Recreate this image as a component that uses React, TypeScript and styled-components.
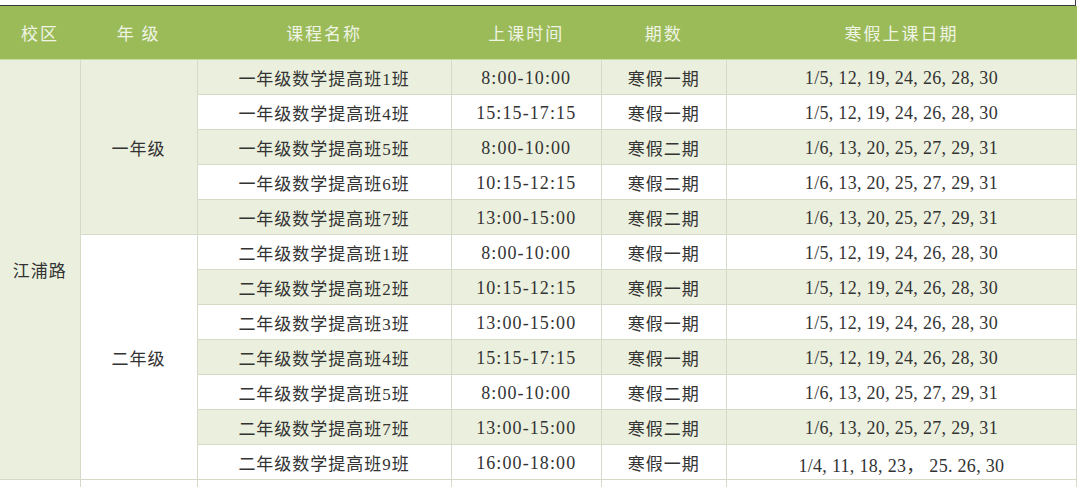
import React from 'react';
import styled, { createGlobalStyle } from 'styled-components';

// 全局样式
const GlobalStyle = createGlobalStyle`
  html, body {
    margin: 0;
    padding: 0;
    background: #ffffff;
  }
  body {
    font-family: "Liberation Serif", "Noto Sans CJK SC", serif;
  }
`;

const Page = styled.div`
  width: 1080px;
  height: 487px;
  overflow: hidden;
  background: #ffffff;
`;

// 上方残留的边框
const TopEdge = styled.div`
  width: 1075px;
  height: 5px;
  border-bottom: 1px solid #3a3a3a;
  border-right: 1px solid #3a3a3a;
`;

const Table = styled.table`
  width: 1077px;
  table-layout: fixed;
  border-collapse: collapse;
  border-spacing: 0;
`;

const Col = styled.col<{ $w: number }>`
  width: ${p => p.$w}px;
`;

const HeadCell = styled.th`
  height: 53px;
  padding: 0;
  background: #9bbb59;
  color: #eff4e4;
  font-family: "Noto Sans CJK SC", sans-serif;
  font-size: 17px;
  font-weight: 400;
  letter-spacing: 2px;
  text-align: center;
  vertical-align: middle;
  border-bottom: 1px solid #c9dba0;
  white-space: pre;
`;

const Row = styled.tr``;

const Cell = styled.td<{ $shade?: boolean }>`
  height: 34px;
  padding: 0;
  background: ${p => (p.$shade ? '#ebf0de' : '#ffffff')};
  color: #333333;
  font-family: "Liberation Serif", "Noto Sans CJK SC", serif;
  font-size: 17px;
  letter-spacing: 1px;
  text-align: center;
  vertical-align: middle;
  border: 1px solid #d6dbc8;
  white-space: nowrap;

  &:first-child {
    border-left: none;
  }
`;

// 纯数字单元格：字号略大，稍微下移以对齐中文
const NumCell = styled(Cell)<{ $spacing: number }>`
  font-size: 18px;
  letter-spacing: ${p => p.$spacing}px;
  padding-top: 3px;
  height: 31px;
`;

const GroupCell = styled(Cell)`
  font-family: "Noto Sans CJK SC", sans-serif;
`;

// 课程数据
const COURSES = [
  { grade: 1, name: '一年级数学提高班1班', time: '8:00-10:00', term: '寒假一期', dates: '1/5, 12, 19, 24, 26, 28, 30' },
  { grade: 1, name: '一年级数学提高班4班', time: '15:15-17:15', term: '寒假一期', dates: '1/5, 12, 19, 24, 26, 28, 30' },
  { grade: 1, name: '一年级数学提高班5班', time: '8:00-10:00', term: '寒假二期', dates: '1/6, 13, 20, 25, 27, 29, 31' },
  { grade: 1, name: '一年级数学提高班6班', time: '10:15-12:15', term: '寒假二期', dates: '1/6, 13, 20, 25, 27, 29, 31' },
  { grade: 1, name: '一年级数学提高班7班', time: '13:00-15:00', term: '寒假二期', dates: '1/6, 13, 20, 25, 27, 29, 31' },
  { grade: 2, name: '二年级数学提高班1班', time: '8:00-10:00', term: '寒假一期', dates: '1/5, 12, 19, 24, 26, 28, 30' },
  { grade: 2, name: '二年级数学提高班2班', time: '10:15-12:15', term: '寒假一期', dates: '1/5, 12, 19, 24, 26, 28, 30' },
  { grade: 2, name: '二年级数学提高班3班', time: '13:00-15:00', term: '寒假一期', dates: '1/5, 12, 19, 24, 26, 28, 30' },
  { grade: 2, name: '二年级数学提高班4班', time: '15:15-17:15', term: '寒假一期', dates: '1/5, 12, 19, 24, 26, 28, 30' },
  { grade: 2, name: '二年级数学提高班5班', time: '8:00-10:00', term: '寒假二期', dates: '1/6, 13, 20, 25, 27, 29, 31' },
  { grade: 2, name: '二年级数学提高班7班', time: '13:00-15:00', term: '寒假二期', dates: '1/6, 13, 20, 25, 27, 29, 31' },
  { grade: 2, name: '二年级数学提高班9班', time: '16:00-18:00', term: '寒假一期', dates: '1/4, 11, 18, 23， 25. 26, 30' },
];

const GRADE_LABEL: Record<number, string> = { 1: '一年级', 2: '二年级' };

const WIDTHS = [80, 117, 254, 150, 125, 350];
const HEADERS = ['校区', '年 级', '课程名称', '上课时间', '期数', '寒假上课日期'];

const App: React.FC = () => {
  return (
    <Page>
      <GlobalStyle />
      <TopEdge />
      <Table>
        <colgroup>
          {WIDTHS.map((w, i) => (
            <Col key={i} $w={w} />
          ))}
        </colgroup>
        <thead>
          <tr>
            {HEADERS.map(h => (
              <HeadCell key={h}>{h}</HeadCell>
            ))}
          </tr>
        </thead>
        <tbody>
          {COURSES.map((c, i) => {
            const shade = i % 2 === 0;
            const firstOfGrade = i === 0 || COURSES[i - 1].grade !== c.grade;
            const span = COURSES.filter(x => x.grade === c.grade).length;
            return (
              <Row key={c.name}>
                {i === 0 && (
                  <GroupCell rowSpan={COURSES.length} $shade>
                    江浦路
                  </GroupCell>
                )}
                {firstOfGrade && (
                  <GroupCell rowSpan={span} $shade={shade}>
                    {GRADE_LABEL[c.grade]}
                  </GroupCell>
                )}
                <Cell $shade={shade}>{c.name}</Cell>
                <NumCell $shade={shade} $spacing={1.1}>{c.time}</NumCell>
                <Cell $shade={shade}>{c.term}</Cell>
                <NumCell $shade={shade} $spacing={0.3}>{c.dates}</NumCell>
              </Row>
            );
          })}
          <Row>
            <Cell />
            <Cell />
            <Cell />
            <Cell />
            <Cell />
            <Cell />
          </Row>
        </tbody>
      </Table>
    </Page>
  );
};

export default App;
